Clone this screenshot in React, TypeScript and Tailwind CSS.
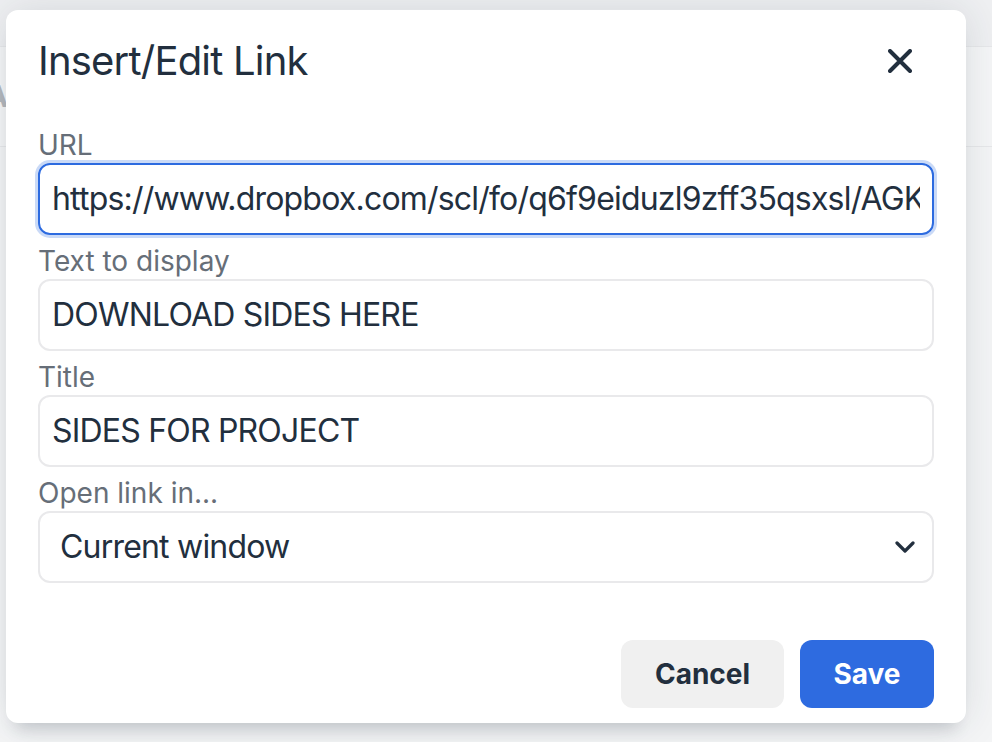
const FONT = { fontFamily: "Inter, 'Noto Sans', 'Liberation Sans', sans-serif" };

function Field({ label, children }: { label: string; children: React.ReactNode }) {
  return (
    <div className="flex flex-col">
      <div className="h-9 text-[28px] leading-9 text-[#666e78]">{label}</div>
      {children}
    </div>
  );
}

function TextBox({ value, focused }: { value: string; focused?: boolean }) {
  return (
    <div
      className={
        focused
          ? "h-[72px] rounded-[12px] border-2 border-[#2d6be0] px-3 flex items-center shadow-[0_0_0_3px_rgba(45,107,224,0.25)]"
          : "h-[72px] rounded-[12px] border-2 border-[#e9e9eb] px-3 flex items-center"
      }
    >
      <div className="w-full overflow-hidden whitespace-nowrap text-[32px] leading-10 tracking-[-0.025em] text-[#222f3e]">
        {value}
      </div>
    </div>
  );
}

export default function App() {
  return (
    <div style={FONT} className="relative w-[992px] h-[742px] overflow-hidden bg-[#f3f4f5]">
      {/* editor behind the backdrop */}
      <div className="h-[47px] bg-[#eff0f2] border-b border-[#e7e8ea]" />
      <div className="h-[100px] bg-[#f5f6f7] border-b border-[#e7e8ea] flex items-center">
        <span className="-ml-[14px] text-[30px] font-bold text-[#b4b8bd]">A:</span>
      </div>
      <div className="h-full bg-[#f4f5f6]" />

      {/* dialog */}
      <div className="absolute left-[6px] top-[10px] w-[960px] h-[713px] bg-white rounded-[12px] shadow-[0_16px_16px_-10px_rgba(34,47,62,0.18),0_0_40px_1px_rgba(34,47,62,0.12)] flex flex-col px-8">
        <div className="mt-[19px] h-[64px] flex items-center justify-between">
          <h1 className="text-[40px] leading-[48px] font-normal tracking-[-0.02em] text-[#222f3e]">Insert/Edit Link</h1>
          <div className="pr-[22px]">
            <svg width="24" height="24" viewBox="0 0 24 24" fill="none" stroke="#222f3e" strokeWidth="4" strokeLinecap="round">
              <path d="M2 2 22 22M22 2 2 22" />
            </svg>
          </div>
        </div>

        <div className="mt-[34px] flex flex-col gap-2">
          <Field label="URL">
            <TextBox focused value="https://www.dropbox.com/scl/fo/q6f9eiduzl9zff35qsxsl/AGKFhXqk4r2bZ0GMeTjQ7dVn?rlkey=m2c8" />
          </Field>
          <Field label="Text to display">
            <TextBox value="DOWNLOAD SIDES HERE" />
          </Field>
          <Field label="Title">
            <TextBox value="SIDES FOR PROJECT" />
          </Field>
          <Field label="Open link in...">
            <div className="h-[72px] rounded-[12px] border-2 border-[#e9e9eb] pl-5 pr-[17px] flex items-center justify-between">
              <span className="text-[32px] leading-10 tracking-[-0.025em] text-[#222f3e]">Current window</span>
              <svg width="20" height="12" viewBox="0 0 20 12" fill="none" stroke="#222f3e" strokeWidth="3.2" strokeLinecap="round" strokeLinejoin="round">
                <path d="M2 2 10 10 18 2" />
              </svg>
            </div>
          </Field>
        </div>

        <div className="mt-auto pb-[15px] flex justify-end gap-4">
          <button className="w-[163px] h-[68px] rounded-[12px] bg-[#f0f0f0] text-[28px] font-bold text-[#222f3e]">
            Cancel
          </button>
          <button className="w-[134px] h-[68px] rounded-[12px] bg-[#2e6be0] text-[28px] font-bold text-white">
            Save
          </button>
        </div>
      </div>
    </div>
  );
}
